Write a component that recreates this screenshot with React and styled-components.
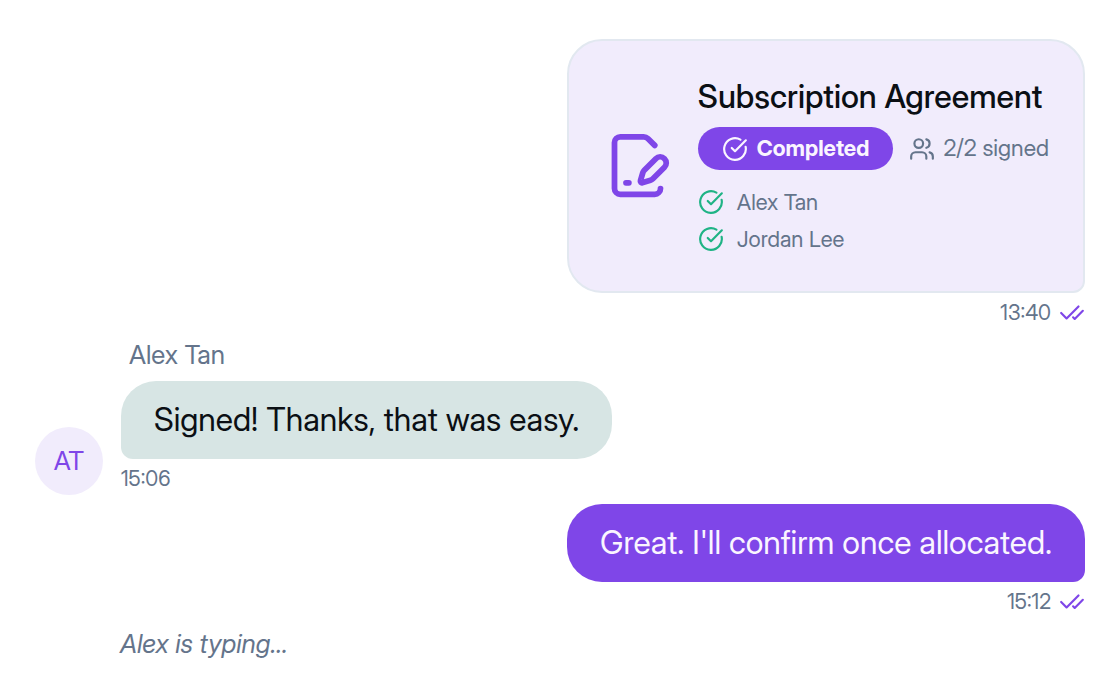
import React from "react";
import styled, { createGlobalStyle } from "styled-components";
import { CheckCheck } from "lucide-react";

const GlobalStyle = createGlobalStyle`
  *, *::before, *::after { box-sizing: border-box; }
  body {
    margin: 0;
    background: #ffffff;
    color: #0b0f14;
    font-family: "Inter Display", Inter, "Liberation Sans", sans-serif;
    font-weight: 400;
  }
  h2, p, ul { margin: 0; padding: 0; }
`;

const Thread = styled.main`
  display: flex;
  flex-direction: column;
  padding: 39px 35px 24px;
`;

const Outgoing = styled.article`
  display: flex;
  flex-direction: column;
  align-items: flex-end;
`;

const Incoming = styled.article`
  display: flex;
  align-items: flex-end;
  gap: 18px;
  margin: 8px 0 9px;
`;

const IncomingBody = styled.div`
  display: flex;
  flex-direction: column;
  align-items: flex-start;
`;

const Sender = styled.p`
  padding: 0 8px;
  margin-bottom: 8px;
  font-size: 26px;
  line-height: 36px;
  color: #64748b;
`;

const Bubble = styled.p`
  padding: 17px 33px;
  font-size: 32px;
  line-height: 44px;
  white-space: nowrap;
  color: ${(p) => (p.$own ? "#faf5ff" : "#0b0f14")};
  background: ${(p) => (p.$own ? "#7f46e8" : "#d7e5e4")};
  border-radius: ${(p) => (p.$own ? "35px 35px 12px 35px" : "35px 35px 35px 12px")};
`;

const Meta = styled.div`
  display: flex;
  align-items: center;
  gap: 8px;
  height: 36px;
  padding-top: 4px;
  font-size: 21px;
  line-height: 32px;
  color: #64748b;

  svg { color: #7f46e8; }
`;

const Card = styled.section`
  display: flex;
  align-items: center;
  gap: 26px;
  min-height: 254px;
  padding: 34px 34px 36px;
  background: #f1ecfc;
  border: 2px solid #e2e8f0;
  border-radius: 35px 35px 12px 35px;
`;

const CardBody = styled.div`
  display: flex;
  flex-direction: column;
`;

const CardTitle = styled.h2`
  font-size: 32px;
  font-weight: 500;
  line-height: 44px;
  white-space: nowrap;
`;

const StatusRow = styled.div`
  display: flex;
  align-items: center;
  gap: 16px;
  margin: 8px 0 16px;
`;

const Badge = styled.span`
  display: flex;
  align-items: center;
  gap: 9px;
  height: 43px;
  padding: 0 24px;
  border-radius: 22px;
  background: #7f46e8;
  color: #faf5ff;
  font-size: 22px;
  font-weight: 700;
`;

const SignedCount = styled.span`
  display: flex;
  align-items: center;
  gap: 8px;
  font-size: 23px;
  color: #64748b;
  white-space: nowrap;
`;

const StatusLabel = styled.span`
  padding-bottom: 2px;
`;

const Signers = styled.ul`
  display: flex;
  flex-direction: column;
  gap: 5px;
  list-style: none;
`;

const Signer = styled.li`
  display: flex;
  align-items: center;
  gap: 13px;
  font-size: 22px;
  line-height: 32px;
  color: #64748b;

  svg { color: #1fb385; }
`;

const Avatar = styled.div`
  display: flex;
  align-items: center;
  justify-content: center;
  width: 68px;
  height: 68px;
  padding-bottom: 2px;
  border-radius: 50%;
  background: #f1ecfc;
  color: #7f46e8;
  font-size: 26px;
`;

const Typing = styled.p`
  padding: 8px 0 0 85px;
  font-size: 26px;
  font-style: italic;
  line-height: 36px;
  color: #64748b;
`;

const Icon = styled.svg.attrs({
  viewBox: "0 0 24 24",
  fill: "none",
  stroke: "currentColor",
  strokeWidth: 2,
  strokeLinecap: "round",
  strokeLinejoin: "round",
  "aria-hidden": true,
})`
  flex: none;
  width: ${(p) => p.$size}px;
  height: ${(p) => p.$size}px;
`;

const AgreementIcon = styled(Icon)`
  color: #7f46e8;
`;

function CircleTick() {
  return (
    <Icon $size={26}>
      <path d="M21.801 10A10 10 0 1 1 17 3.335" />
      <path d="m9 11 3 3L22 4" />
    </Icon>
  );
}

function Receipt({ time }) {
  return (
    <Meta>
      <time>{time}</time>
      <CheckCheck size={26} aria-label="Read" />
    </Meta>
  );
}

const signers = ["Alex Tan", "Jordan Lee"];

export default function App() {
  return (
    <>
      <GlobalStyle />
      <Thread>
        <Outgoing>
          <Card>
            <AgreementIcon $size={69}>
              <path d="m18 5-2.414-2.414A2 2 0 0 0 14.172 2H6a2 2 0 0 0-2 2v16a2 2 0 0 0 2 2h12a2 2 0 0 0 2-2" />
              <path d="M21.378 12.626a1 1 0 0 0-3.004-3.004l-4.01 4.012a2 2 0 0 0-.506.854l-.837 2.87a.5.5 0 0 0 .62.62l2.87-.837a2 2 0 0 0 .854-.506z" />
              <path d="M8 18h1" />
            </AgreementIcon>
            <CardBody>
              <CardTitle>Subscription Agreement</CardTitle>
              <StatusRow>
                <Badge>
                  <CircleTick />
                  <StatusLabel>Completed</StatusLabel>
                </Badge>
                <SignedCount>
                  <Icon $size={26}>
                    <path d="M16 21v-2a4 4 0 0 0-4-4H6a4 4 0 0 0-4 4v2" />
                    <circle cx="9" cy="7" r="4" />
                    <path d="M22 21v-2a4 4 0 0 0-3-3.87" />
                    <path d="M16 3.13a4 4 0 0 1 0 7.75" />
                  </Icon>
                  <StatusLabel>2/2 signed</StatusLabel>
                </SignedCount>
              </StatusRow>
              <Signers>
                {signers.map((name) => (
                  <Signer key={name}>
                    <CircleTick />
                    {name}
                  </Signer>
                ))}
              </Signers>
            </CardBody>
          </Card>
          <Receipt time="13:40" />
        </Outgoing>

        <Incoming>
          <Avatar>AT</Avatar>
          <IncomingBody>
            <Sender>Alex Tan</Sender>
            <Bubble>Signed! Thanks, that was easy.</Bubble>
            <Meta>
              <time>15:06</time>
            </Meta>
          </IncomingBody>
        </Incoming>

        <Outgoing>
          <Bubble $own>Great. I'll confirm once allocated.</Bubble>
          <Receipt time="15:12" />
        </Outgoing>

        <Typing>Alex is typing...</Typing>
      </Thread>
    </>
  );
}
